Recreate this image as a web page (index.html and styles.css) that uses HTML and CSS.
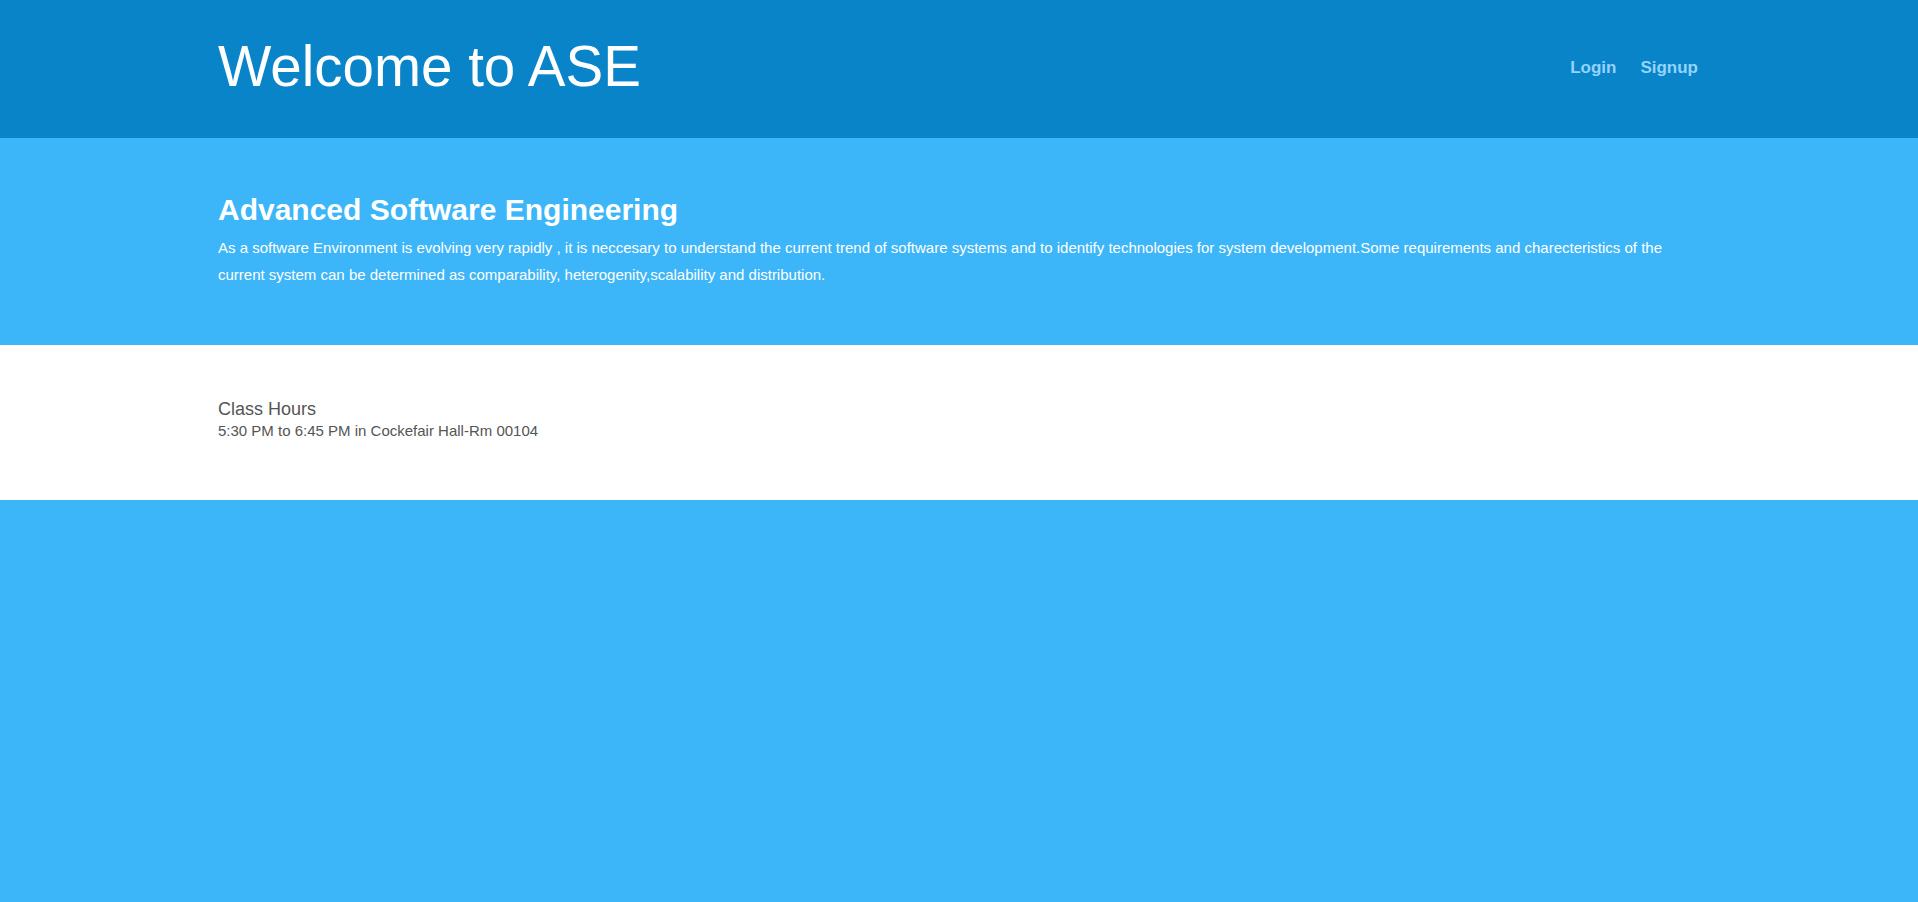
FILE: index.html
```html
<!DOCTYPE html>
<html>
<head>
<meta charset="utf-8">
<title>Welcome to ASE</title>
<link rel="stylesheet" href="styles.css">
</head>
<body>
<header class="topbar">
  <div class="container topbar-inner">
    <h1 class="brand">Welcome to ASE</h1>
    <nav class="nav">
      <a href="#" class="nav-link">Login</a>
      <a href="#" class="nav-link">Signup</a>
    </nav>
  </div>
</header>
<section class="hero">
  <div class="container">
    <h2 class="hero-title">Advanced Software Engineering</h2>
    <p class="hero-text">As a software Environment is evolving very rapidly , it is neccesary to understand the current trend of software systems and to identify technologies for system development.Some requirements and charecteristics of the current system can be determined as comparability, heterogenity,scalability and distribution.</p>
  </div>
</section>
<section class="info">
  <div class="container">
    <div class="info-title">Class Hours</div>
    <div class="info-text">5:30 PM to 6:45 PM in Cockefair Hall-Rm 00104</div>
  </div>
</section>
</body>
</html>
```
FILE: styles.css
```css
html, body {
  margin: 0;
  padding: 0;
}
body {
  background: #3cb6f9;
  font-family: "Liberation Sans", Arial, sans-serif;
  min-height: 902px;
}
.container {
  width: 1482px;
  margin: 0 auto;
}
.topbar {
  background: #0984c9;
  height: 138px;
}
.topbar-inner {
  display: flex;
  align-items: center;
  justify-content: space-between;
  height: 100%;
}
.brand {
  margin: 0;
  font-weight: normal;
  font-size: 56.5px;
  color: #ffffff;
  line-height: 1;
  padding-bottom: 4px;
}
.nav {
  display: flex;
  gap: 24px;
  padding-right: 2px;
  padding-bottom: 2px;
}
.nav-link {
  color: #93d4fb;
  font-weight: bold;
  font-size: 17px;
  text-decoration: none;
}
.hero {
  background: #3cb6f9;
  height: 207px;
  box-sizing: border-box;
  padding-top: 55px;
}
.hero-title {
  margin: 0;
  color: #ffffff;
  font-weight: bold;
  font-size: 30px;
  line-height: 34px;
}
.hero-text {
  margin: 7px 0 0;
  color: #ffffff;
  font-size: 15px;
  line-height: 27px;
}
.info {
  background: #ffffff;
  height: 155px;
  box-sizing: border-box;
  padding-top: 53px;
  color: #555555;
}
.info-title {
  font-size: 18px;
  line-height: 22px;
}
.info-text {
  font-size: 15px;
  line-height: 20px;
  margin-top: 1px;
}
```
